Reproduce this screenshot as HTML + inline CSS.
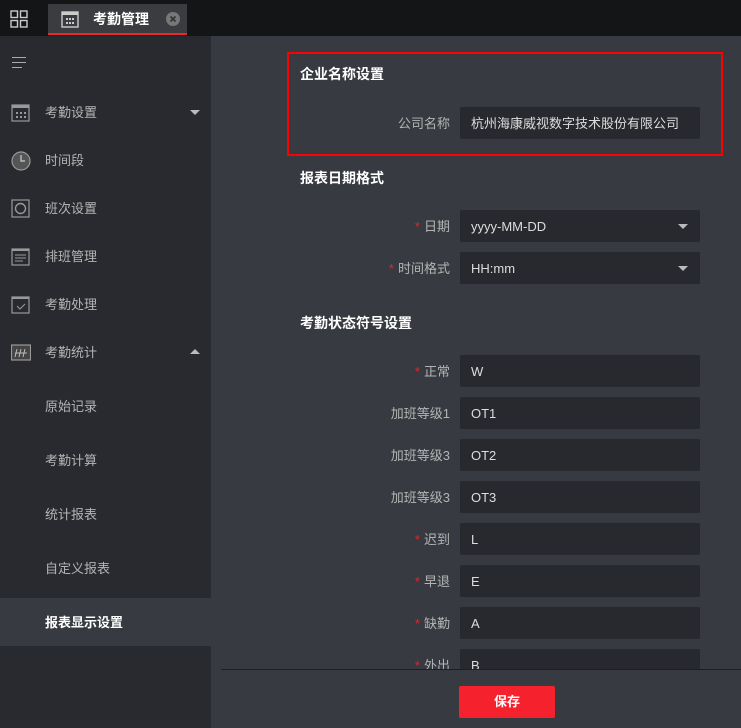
<!DOCTYPE html>
<html><head><meta charset="utf-8"><style>
*{margin:0;padding:0;box-sizing:border-box}
body{width:741px;height:728px;overflow:hidden;background:#373a40;font-family:"Liberation Sans","Noto Sans CJK SC",sans-serif;font-size:13px;color:#c8c8c8;position:relative}
.top{position:absolute;left:0;top:0;width:741px;height:36px;background:#141517}
.tab{position:absolute;left:48px;top:4px;width:139px;height:31px;background:#3a3c40;border-bottom:2px solid #f0262c}
.side{position:absolute;left:0;top:36px;width:211px;height:692px;background:#282a2f}
.it{position:absolute;left:0;width:211px;height:48px;line-height:49px}
.it .t{position:absolute;left:45px;color:#b4b4b4}
.ic{position:absolute;left:11px;top:15px}
.lbl{position:absolute;right:291px;width:150px;text-align:right;color:#b4b4b4;height:32px;line-height:33px}
.lbl b{color:#e0262c;font-weight:normal;margin-right:4px}
.in{position:absolute;left:460px;width:240px;height:32px;background:#27292e;border-radius:2px;line-height:32px;padding-left:11px;padding-top:1px;color:#ddd}
.h{position:absolute;left:300px;font-size:14px;font-weight:bold;color:#fff}
.arr{position:absolute;right:12px;top:14px;width:0;height:0;border-left:5px solid transparent;border-right:5px solid transparent;border-top:5px solid #bbb}
</style></head><body>
<div class="top">
<svg style="position:absolute;left:10px;top:10px" width="18" height="18"><g fill="none" stroke="#ccc" stroke-width="1.4"><rect x="1" y="1" width="6.5" height="6.5"/><rect x="10.5" y="1" width="6.5" height="6.5"/><rect x="1" y="10.5" width="6.5" height="6.5"/><rect x="10.5" y="10.5" width="6.5" height="6.5"/></g></svg>
<div class="tab">
<svg style="position:absolute;left:13px;top:6px" width="18" height="18"><rect x="1" y="2" width="16" height="15" fill="none" stroke="#ccc" stroke-width="1.4"/><rect x="1" y="2" width="16" height="3" fill="#ccc"/><g fill="#ccc"><rect x="5" y="8" width="2" height="2"/><rect x="8" y="8" width="2" height="2"/><rect x="11" y="8" width="2" height="2"/><rect x="5" y="12" width="2" height="2"/><rect x="8" y="12" width="2" height="2"/><rect x="11" y="12" width="2" height="2"/></g></svg>
<span style="position:absolute;left:45px;top:5px;font-size:14px;font-weight:bold;color:#fff">考勤管理</span>
<svg style="position:absolute;left:118px;top:8px" width="14" height="14"><circle cx="7" cy="7" r="7" fill="#777"/><path d="M4.5 4.5l5 5M9.5 4.5l-5 5" stroke="#333" stroke-width="1.6"/></svg>
</div></div>
<div class="side">
<svg style="position:absolute;left:12px;top:21px" width="14" height="11"><path d="M0 .5h14M0 5.5h14M0 10.5h10" stroke="#aaa"/></svg>
<div class="it" style="top:52px"><svg class="ic" width="19" height="19"><rect x="1" y="2" width="17" height="16" fill="none" stroke="#999" stroke-width="1.2"/><rect x="1" y="2" width="17" height="3" fill="#999"/><g fill="#999"><rect x="5" y="9" width="2" height="2"/><rect x="9" y="9" width="2" height="2"/><rect x="13" y="9" width="2" height="2"/><rect x="5" y="13" width="2" height="2"/><rect x="9" y="13" width="2" height="2"/><rect x="13" y="13" width="2" height="2"/></g></svg><span class="t">考勤设置</span><div class="arr" style="right:11px;top:22px"></div></div>
<div class="it" style="top:100px"><svg class="ic" width="20" height="20"><circle cx="10" cy="10" r="9" fill="#555" stroke="#999" stroke-width="1.2"/><path d="M10 4v6h4" stroke="#ccc" fill="none" stroke-width="1.2"/></svg><span class="t">时间段</span></div>
<div class="it" style="top:148px"><svg class="ic" width="19" height="19"><rect x="1" y="1" width="17" height="17" fill="none" stroke="#999" stroke-width="1.2"/><circle cx="9.5" cy="9.5" r="5" fill="none" stroke="#999" stroke-width="1.4"/></svg><span class="t">班次设置</span></div>
<div class="it" style="top:196px"><svg class="ic" width="19" height="19"><rect x="1" y="2" width="17" height="16" fill="none" stroke="#999" stroke-width="1.2"/><rect x="1" y="2" width="17" height="2" fill="#999"/><path d="M4 8h11M4 11h11M4 14h8" stroke="#999"/></svg><span class="t">排班管理</span></div>
<div class="it" style="top:244px"><svg class="ic" width="19" height="19"><rect x="1" y="2" width="17" height="16" fill="none" stroke="#999" stroke-width="1.2"/><rect x="1" y="2" width="17" height="2" fill="#999"/><path d="M6 11l3 3 5-5" stroke="#999" fill="none"/></svg><span class="t">考勤处理</span></div>
<div class="it" style="top:292px"><svg class="ic" width="20" height="19"><rect x="0.5" y="2" width="19" height="15" fill="#444" stroke="#999" stroke-width="1.2"/><path d="M6 6l-2 8M10 6l-2 8M14 6l-2 8M4 10h12" stroke="#bbb"/></svg><span class="t">考勤统计</span><div class="arr" style="right:11px;top:21px;border-top:0;border-bottom:5px solid #bbb"></div></div>
<div class="it" style="top:346px"><span class="t">原始记录</span></div>
<div class="it" style="top:400px"><span class="t">考勤计算</span></div>
<div class="it" style="top:454px"><span class="t">统计报表</span></div>
<div class="it" style="top:508px"><span class="t">自定义报表</span></div>
<div class="it" style="top:562px;background:#373a40"><span class="t" style="color:#fff;font-weight:bold">报表显示设置</span></div>
</div>
<div style="position:absolute;left:287px;top:52px;width:436px;height:104px;border:2px solid #f00"></div>
<div class="h" style="top:64px">企业名称设置</div>
<div class="lbl" style="top:107px">公司名称</div><div class="in" style="top:107px">杭州海康威视数字技术股份有限公司</div>
<div class="h" style="top:168px">报表日期格式</div>
<div class="lbl" style="top:210px"><b>*</b>日期</div><div class="in" style="top:210px">yyyy-MM-DD<div class="arr"></div></div>
<div class="lbl" style="top:252px"><b>*</b>时间格式</div><div class="in" style="top:252px">HH:mm<div class="arr"></div></div>
<div class="h" style="top:313px">考勤状态符号设置</div>
<div class="lbl" style="top:355px"><b>*</b>正常</div><div class="in" style="top:355px">W</div>
<div class="lbl" style="top:397px">加班等级1</div><div class="in" style="top:397px">OT1</div>
<div class="lbl" style="top:439px">加班等级3</div><div class="in" style="top:439px">OT2</div>
<div class="lbl" style="top:481px">加班等级3</div><div class="in" style="top:481px">OT3</div>
<div class="lbl" style="top:523px"><b>*</b>迟到</div><div class="in" style="top:523px">L</div>
<div class="lbl" style="top:565px"><b>*</b>早退</div><div class="in" style="top:565px">E</div>
<div class="lbl" style="top:607px"><b>*</b>缺勤</div><div class="in" style="top:607px">A</div>
<div class="lbl" style="top:649px"><b>*</b>外出</div><div class="in" style="top:649px">B</div>
<div style="position:absolute;left:221px;top:669px;width:520px;height:59px;background:#373a40;border-top:1px solid #1e1f22"></div>
<div style="position:absolute;left:459px;top:686px;width:96px;height:32px;background:#f5222d;border-radius:2px;color:#fff;font-weight:bold;text-align:center;line-height:32px">保存</div>
</body></html>
